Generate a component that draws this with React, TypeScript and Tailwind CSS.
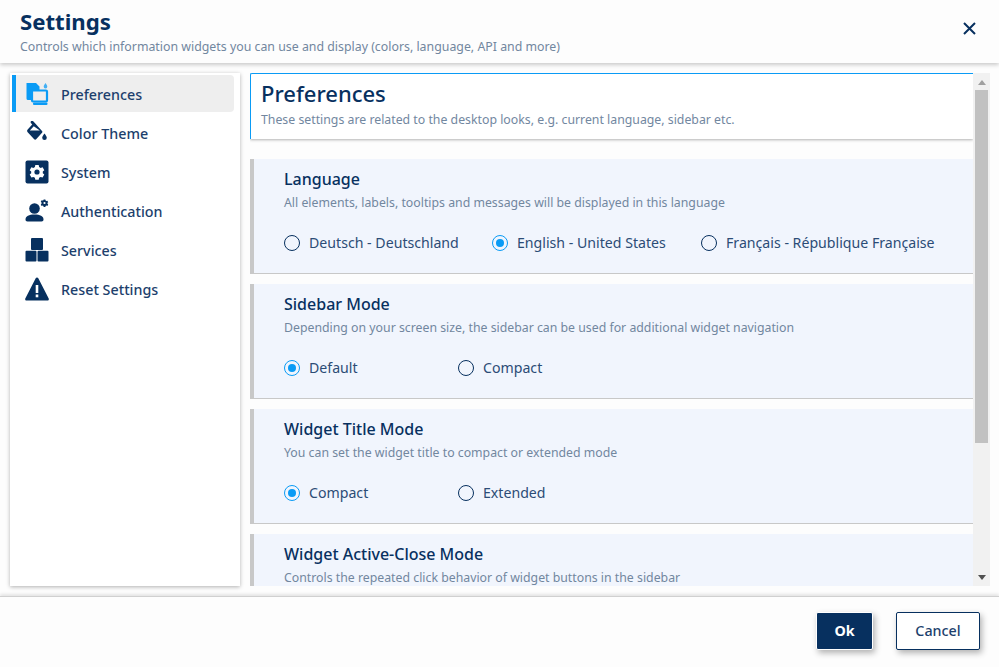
const navy = "#07305f";

function PrefIcon() {
  return (
    <svg width="24" height="24" viewBox="0 0 24 24" fill="#0a9bf5">
      <path d="M1.500 1H11l3.500 3.500V8H7v10H3a1.500 1.500 0 0 1-1.500-1.500z" />
      <rect x="7" y="8.500" width="15" height="11" rx="1" fill="#eeeeee" stroke="#0a9bf5" strokeWidth="2.200" />
      <rect x="8" y="20.500" width="14.500" height="2.500" rx="1" />
      <path d="M20.500 1c.9 1.400 1.800 2.500 1.800 3.700a1.800 1.800 0 0 1-3.600 0c0-1.200.9-2.300 1.800-3.700z" opacity="0.75" />
    </svg>
  );
}
function PaintIcon() {
  return (
    <svg width="24" height="24" viewBox="0 0 24 24" fill={navy}>
      <g transform="translate(0.500 -1.500) scale(0.87 0.95)">
        <path d="M8.500 1.500 11 4l8 8a1.500 1.500 0 0 1 0 2l-6.500 6.500a2 2 0 0 1-2.800 0L2.500 13.300a2 2 0 0 1 0-2.800L7.700 5.300 6.700 4.200a1.300 1.300 0 0 1 1.800-2.700zM9.500 7 5 11.500h11.500z" />
      </g>
      <path d="M19.500 12.500c1 1.600 2.300 2.700 2.300 4.200a2.300 2.300 0 0 1-4.600 0c0-1.500 1.300-2.600 2.300-4.200z" />
    </svg>
  );
}
function SystemIcon() {
  return (
    <svg width="24" height="24" viewBox="0 0 24 24">
      <rect x="0.500" y="0.500" width="23" height="23" rx="2" fill={navy} />
      <path
        fill="#fff"
        d="M10.300 5h3.400l.4 2 1.500.9 2-.7 1.700 3-1.500 1.300v1.800l1.500 1.300-1.700 3-2-.7-1.500.9-.4 2h-3.400l-.4-2-1.500-.9-2 .7-1.700-3 1.500-1.300v-1.800L4.700 10.200l1.700-3 2 .7 1.500-.9z"
      />
      <circle cx="12" cy="12" r="2.600" fill={navy} />
    </svg>
  );
}
function AuthIcon() {
  return (
    <svg width="24" height="24" viewBox="0 0 24 24" fill={navy}>
      <circle cx="9.500" cy="9.500" r="5.300" />
      <path d="M0.500 20.500c0-3.200 3.500-5 9-5s9 1.800 9 5c0 1-.6 2-2 2H2.500c-1.400 0-2-1-2-2z" />
      <g transform="translate(19.500 4) scale(0.85) translate(-19.500 -4.500)">
        <path d="M18.500 0.500h2l.3 1.200.9.500 1.200-.4 1 1.700-.9.800v1.100l.9.800-1 1.700-1.200-.4-.9.500-.3 1.200h-2l-.3-1.200-.9-.5-1.200.4-1-1.700.9-.8V3.800l-.9-.8 1-1.700 1.200.4.900-.5z" />
        <circle cx="19.500" cy="4.500" r="1.300" fill="#fff" />
      </g>
    </svg>
  );
}
function ServicesIcon() {
  return (
    <svg width="24" height="24" viewBox="0 0 24 24" fill={navy}>
      <rect x="6" y="0" width="12" height="12" rx="1" />
      <rect x="0.500" y="12.800" width="11" height="10.700" rx="1" />
      <rect x="12.500" y="12.800" width="11" height="10.700" rx="1" />
    </svg>
  );
}
function WarnIcon() {
  return (
    <svg width="24" height="24" viewBox="0 0 24 24">
      <path fill={navy} d="M12 .500c.6 0 1 .3 1.300.8l10.400 20.200c.4.900-.1 1.900-1.200 1.900H1.500C.4 23.400-.1 22.400.3 21.500L10.700 1.300c.3-.5.700-.8 1.300-.8z" />
      <rect x="10.700" y="8" width="2.600" height="8" fill="#fff" />
      <rect x="10.700" y="17.500" width="2.600" height="2.800" fill="#fff" />
    </svg>
  );
}

const nav = [
  { label: "Preferences", icon: <PrefIcon />, active: true },
  { label: "Color Theme", icon: <PaintIcon /> },
  { label: "System", icon: <SystemIcon /> },
  { label: "Authentication", icon: <AuthIcon /> },
  { label: "Services", icon: <ServicesIcon /> },
  { label: "Reset Settings", icon: <WarnIcon /> },
];

function Radio({ label, checked, width }: { label: string; checked?: boolean; width: string }) {
  return (
    <div className={`flex items-center gap-[9px] ${width}`}>
      {checked ? (
        <span className="flex h-4 w-4 shrink-0 items-center justify-center rounded-full border-[1.5px] border-[#0a9bf5]">
          <span className="h-2 w-2 rounded-full bg-[#0a9bf5]" />
        </span>
      ) : (
        <span className="h-4 w-4 shrink-0 rounded-full border-[1.5px] border-[#07305f]" />
      )}
      <span className="text-[14.15px] leading-5 whitespace-nowrap text-[#2c4c76]">{label}</span>
    </div>
  );
}

function Section({
  title,
  desc,
  children,
  last,
}: {
  title: string;
  desc: string;
  children?: React.ReactNode;
  last?: boolean;
}) {
  return (
    <section
      className={`shrink-0 border-l-4 border-[#c8c8c8] bg-[#f1f5fd] pl-[30px] pt-[9px] ${
        last ? "h-[115px]" : "mb-[10px] h-[115px] border-b border-b-[#c8c8c8]"
      }`}
    >
      <h3 className="text-[16px] leading-[22px] font-medium text-[#07305f]">{title}</h3>
      <p className="mt-[5px] text-[12.3px] leading-4 text-[#72879f]">{desc}</p>
      <div className="mt-[22px] flex">{children}</div>
    </section>
  );
}

export default function App() {
  return (
    <div
      className="flex h-[667px] w-[999px] flex-col overflow-hidden bg-[#fdfdfd]"
      style={{ fontFamily: '"Noto Sans", sans-serif' }}
    >
      <header className="relative z-10 flex h-[63px] shrink-0 items-start justify-between bg-[#fdfdfd] pl-5 pr-[23px] shadow-[0_2px_4px_rgba(0,0,0,0.2)]">
        <div className="pt-[7px]">
          <h1 className="text-[22.2px] leading-[29px] font-bold text-[#07305f]">Settings</h1>
          <p className="mt-[3px] text-[12.35px] leading-4 text-[#72879f]">
            Controls which information widgets you can use and display (colors, language, API and more)
          </p>
        </div>
        <svg className="mt-[22px]" width="13" height="13" viewBox="0 0 13 13" stroke={navy} strokeWidth="2" fill="none">
          <path d="M1 1l11 11M12 1L1 12" />
        </svg>
      </header>

      <main className="flex min-h-0 flex-1 pt-[10px] pb-[10px] pl-[10px] pr-[9px]">
        <nav className="w-[230px] shrink-0 bg-white pt-[2px] shadow-[0_1px_4px_rgba(0,0,0,0.3)]">
          {nav.map((n) => (
            <div
              key={n.label}
              className={`mb-[2px] ml-[2px] mr-[6px] flex h-[37px] items-center rounded-r-[4px] border-l-4 pl-[9px] ${
                n.active ? "border-[#0a9bf5] bg-[#eeeeee]" : "border-transparent"
              }`}
            >
              <span className="flex w-[36px] shrink-0">{n.icon}</span>
              <span className="pt-[2px] text-[14.3px] font-medium text-[#1d3f6d]">{n.label}</span>
            </div>
          ))}
        </nav>

        <div className="ml-[10px] flex min-w-0 flex-1">
          <div className="min-w-0 flex-1 overflow-hidden">
            <div className="mb-[20px] h-[66px] rounded-tl-[2px] border-t border-l border-[#0a9bf5] bg-white pl-[10px] pt-[3px] shadow-[0_1px_3px_rgba(0,0,0,0.3)]">
              <h2 className="text-[22px] leading-[32px] font-medium text-[#07305f]">Preferences</h2>
              <p className="mt-[3px] text-[12.3px] leading-4 text-[#72879f]">
                These settings are related to the desktop looks, e.g. current language, sidebar etc.
              </p>
            </div>
            <div className="flex h-[428px] flex-col overflow-hidden">
              <Section
                title="Language"
                desc="All elements, labels, tooltips and messages will be displayed in this language"
              >
                <Radio label="Deutsch - Deutschland" width="w-[208px]" />
                <Radio label="English - United States" checked width="w-[209px]" />
                <Radio label="Français - République Française" width="w-[250px]" />
              </Section>
              <Section
                title="Sidebar Mode"
                desc="Depending on your screen size, the sidebar can be used for additional widget navigation"
              >
                <Radio label="Default" checked width="w-[174px]" />
                <Radio label="Compact" width="w-[174px]" />
              </Section>
              <Section title="Widget Title Mode" desc="You can set the widget title to compact or extended mode">
                <Radio label="Compact" checked width="w-[174px]" />
                <Radio label="Extended" width="w-[174px]" />
              </Section>
              <Section
                last
                title="Widget Active-Close Mode"
                desc="Controls the repeated click behavior of widget buttons in the sidebar"
              />
            </div>
          </div>

          <div className="flex w-[17px] shrink-0 flex-col items-center bg-[#f1f1f1]">
            <svg className="mt-[7px]" width="8" height="5" viewBox="0 0 8 5" fill="#a0a0a0">
              <path d="M4 0l4 5H0z" />
            </svg>
            <div className="mt-[5px] h-[353px] w-[13px] bg-[#c1c1c1]" />
            <div className="flex-1" />
            <svg className="mb-[6px]" width="8" height="5" viewBox="0 0 8 5" fill="#505050">
              <path d="M0 0h8L4 5z" />
            </svg>
          </div>
        </div>
      </main>

      <footer className="relative flex h-[71px] shrink-0 items-start justify-end gap-[23px] border-t border-[#d0d0d0] pr-[19px] pt-[15px] shadow-[0_-2px_3px_rgba(0,0,0,0.1)]">
        <button className="h-[38px] w-[57px] rounded-[2px] border border-white bg-[#07305f] text-[14.3px] font-bold text-white shadow-[2px_3px_6px_rgba(0,0,0,0.3)]">
          Ok
        </button>
        <button className="h-[38px] w-[84px] rounded-[2px] border border-[#07305f] bg-white text-[14.3px] font-medium text-[#1d3f6d] shadow-[2px_3px_6px_rgba(0,0,0,0.3)]">
          Cancel
        </button>
      </footer>
    </div>
  );
}
